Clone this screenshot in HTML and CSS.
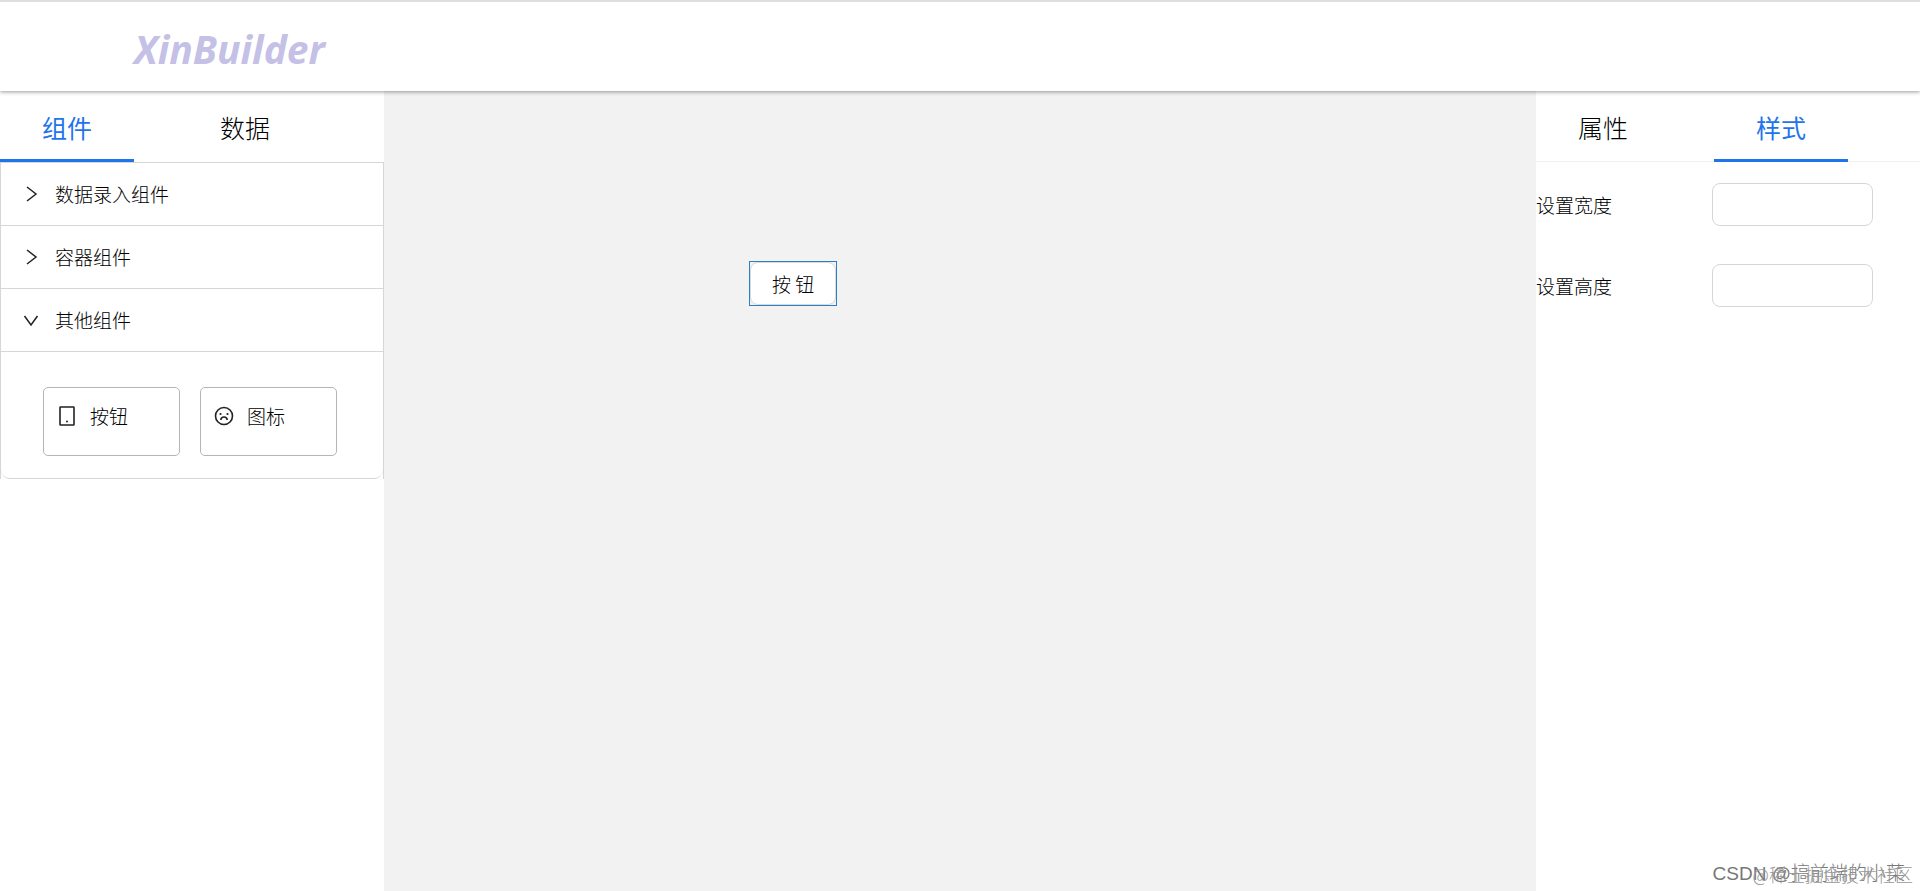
FILE: index.html
```html
<!DOCTYPE html>
<html lang="zh-CN">
<head>
<meta charset="utf-8">
<title>XinBuilder</title>
<link rel="stylesheet" href="styles.css">
</head>
<body>
<header class="header"><h1 class="logo">XinBuilder</h1></header>
<main class="workspace">
  <aside class="side">
    <nav class="tabs">
      <button class="tab tab-active" type="button">组件</button>
      <button class="tab" type="button">数据</button>
    </nav>
    <div class="collapse">
      <button class="collapse-head" type="button" aria-expanded="false">
        <svg class="arrow" viewBox="0 0 16 16"><path d="M4 1l9 7-9 7"/></svg>数据录入组件
      </button>
      <button class="collapse-head" type="button" aria-expanded="false">
        <svg class="arrow" viewBox="0 0 16 16"><path d="M4 1l9 7-9 7"/></svg>容器组件
      </button>
      <button class="collapse-head" type="button" aria-expanded="true">
        <svg class="arrow" viewBox="0 0 16 16"><path d="M1.500 4L8 13l6.500-9"/></svg>其他组件
      </button>
      <div class="collapse-body">
        <button class="card" type="button">
          <svg class="card-icon" viewBox="0 0 20 20"><rect x="3" y="1" width="14" height="18" rx="0.500"/><circle class="dot" cx="10" cy="15.500" r="1"/></svg>按钮
        </button>
        <button class="card" type="button">
          <svg class="card-icon" viewBox="0 0 20 20"><circle cx="10" cy="10" r="8.500"/><circle class="dot" cx="6.500" cy="8" r="1.100"/><circle class="dot" cx="13.500" cy="8" r="1.100"/><path d="M6.800 14c.3-4 6.100-4 6.400 0"/></svg>图标
        </button>
      </div>
    </div>
  </aside>
  <section class="canvas">
    <div class="node"><button class="node-button" type="button">按 钮</button></div>
  </section>
  <aside class="side">
    <nav class="tabs tabs-line">
      <button class="tab" type="button">属性</button>
      <button class="tab tab-active" type="button">样式</button>
    </nav>
    <form class="form">
      <label for="w">设置宽度</label><input class="field" id="w" type="text">
      <label for="h">设置高度</label><input class="field" id="h" type="text">
    </form>
  </aside>
</main>
<div class="mark mark-front">CSDN @搞前端的小菜</div>
<div class="mark mark-back">@稀土掘金技术社区</div>
</body>
</html>
```
FILE: styles.css
```css
* { box-sizing: border-box; }
body {
  margin: 0;
  min-height: 100vh;
  display: flex;
  flex-direction: column;
  background: #fff;
  color: #000;
  font-family: "Noto Sans CJK SC", sans-serif;
  font-size: 19px;
  font-weight: 300;
  line-height: 30px;
}
button {
  margin: 0;
  padding: 0;
  border: 0;
  background: none;
  color: inherit;
  font: inherit;
}
.header {
  position: relative;
  z-index: 1;
  display: flex;
  align-items: center;
  height: 91px;
  padding: 4px 134px 0;
  border-top: 2px solid #dedede;
  background: #fff;
  box-shadow: 0 1px 4px rgba(0, 0, 0, 0.4);
}
.logo {
  margin: 0;
  color: #c4c0e6;
  font: italic 700 39px/52px "Open Sans", "Noto Sans", sans-serif;
}
.workspace {
  flex: 1;
  display: grid;
  grid-template-columns: 1fr 3fr 1fr;
}
.tabs {
  display: flex;
  gap: 44px;
  height: 71px;
}
.tabs-line { border-bottom: 1px solid #f0f0f0; }
.tab {
  padding: 3px 42px 0;
  font-size: 25px;
  border-bottom: 3px solid transparent;
}
.tabs-line .tab { margin-bottom: -1px; }
.tab-active {
  color: #1f74ec;
  border-bottom-color: #1f74ec;
  font-weight: 400;
}
.collapse {
  border: 1px solid #d6d6d6;
  border-bottom: 0;
}
.collapse-head {
  display: flex;
  align-items: center;
  gap: 16px;
  width: 100%;
  height: 63px;
  padding: 0 22px;
  border-bottom: 1px solid #d6d6d6;
}
.arrow {
  width: 16px;
  height: 16px;
  fill: none;
  stroke: #222;
  stroke-width: 1.5;
}
.collapse-body {
  display: flex;
  gap: 20px;
  padding: 35px 42px 22px;
  border-bottom: 1px solid #d6d6d6;
  border-radius: 0 0 9px 9px;
}
.card {
  display: flex;
  align-items: flex-start;
  gap: 13px;
  width: 137px;
  height: 69px;
  padding: 13px;
  border: 1px solid #b5b5b5;
  border-radius: 5px;
}
.card-icon {
  width: 20px;
  height: 20px;
  margin-top: 5px;
  fill: none;
  stroke: #222;
  stroke-width: 1.6;
}
.dot { fill: #222; stroke: none; }
.canvas { position: relative; background: #f2f2f2; }
.node {
  position: absolute;
  left: 365px;
  top: 170px;
  border: 1px solid #2f7cc8;
}
.node-button {
  display: block;
  height: 43px;
  padding: 0 21px;
  border: 1px solid #d9d9d9;
  border-radius: 8px;
  background: #fff;
}
.form {
  display: grid;
  grid-template-columns: 176px 161px;
  row-gap: 38px;
  align-items: center;
  padding-top: 21px;
}
.field {
  width: 100%;
  height: 43px;
  padding: 0 14px;
  border: 1px solid #d6d6d6;
  border-radius: 8px;
  font: inherit;
}
.mark {
  position: absolute;
  bottom: 2px;
  white-space: nowrap;
}
.mark-front {
  right: 15px;
  color: #777;
  font-family: "Liberation Sans", "Noto Sans CJK SC", sans-serif;
}
.mark-back {
  right: 7px;
  color: #999;
  font-size: 18px;
}
```
